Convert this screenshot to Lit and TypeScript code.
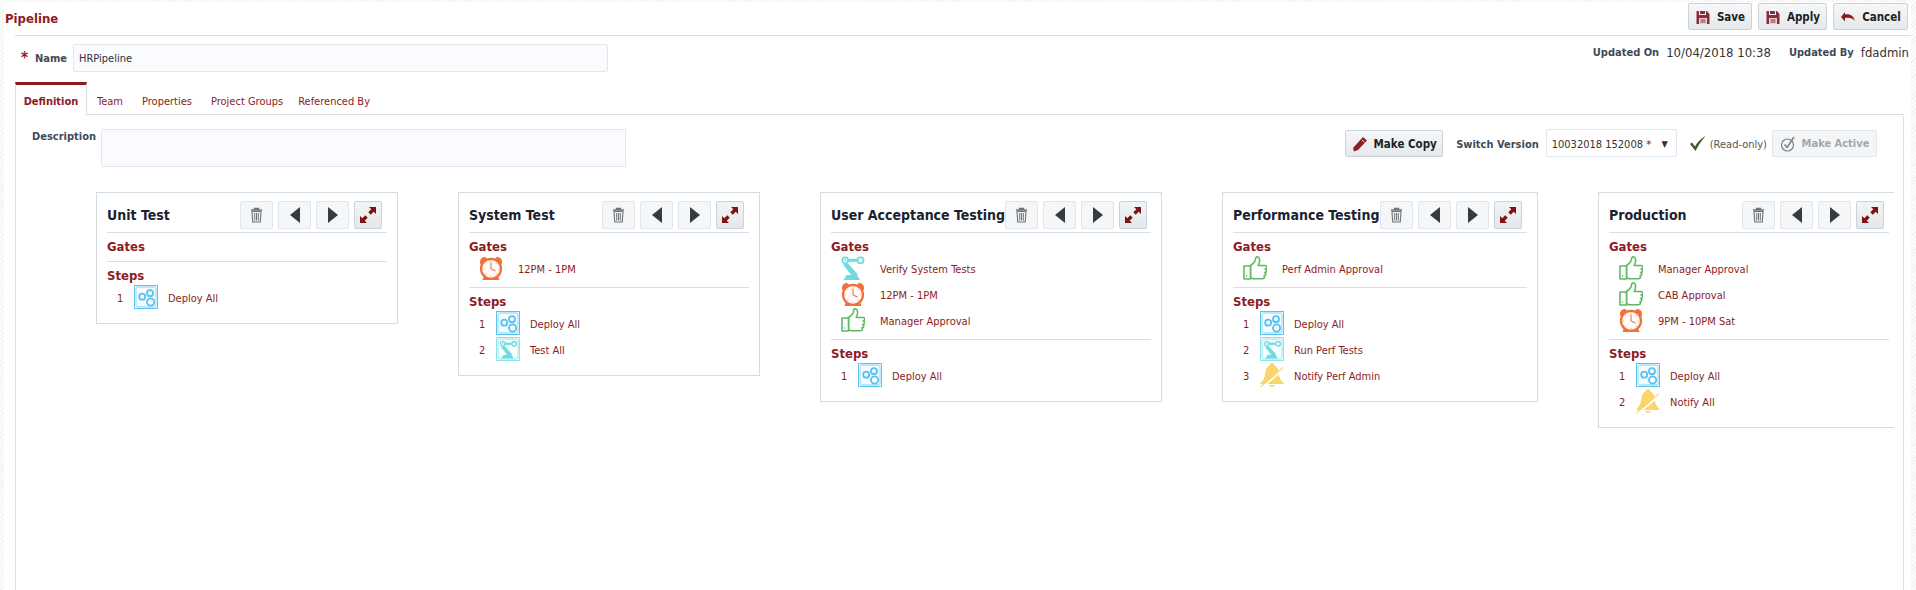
import { LitElement, html, css, svg } from "lit";
import { customElement } from "lit/decorators.js";

const gears = svg`<rect x=".5" y=".5" width="23" height="23" fill="#fff" stroke="#5cc3f1"/><rect x="2" y="2" width="20" height="20" rx="2" fill="#f4fbff" stroke="#a8e1f8" stroke-width="1.3"/><g fill="none" stroke="#58c1f0" stroke-width="1.800"><circle cx="8.2" cy="11.7" r="3"/><circle cx="16" cy="8.2" r="3"/><circle cx="16.6" cy="17" r="3.6"/></g>`;
const arm = svg`<g fill="none" stroke="#6fdbe0"><circle cx="4.200" cy="4.300" r="3" stroke-width="1.700"/><path d="M7.500 4.300h8.500" stroke-width="3"/><circle cx="19.500" cy="4.300" r="3" stroke-width="1.800"/></g><circle cx="4.200" cy="4.300" r="1" fill="#6fdbe0"/><path d="M2 8.500l5-1 10 11-6 1.500z" fill="#6fdbe0"/><path d="M5.500 19h10.500l3 5H2.500z" fill="#6fdbe0"/>`;
const armBox = svg`<rect x=".5" y=".5" width="23" height="23" fill="#fff" stroke="#8fe3ea"/><rect x="2" y="2" width="20" height="20" rx="2" fill="#f6feff" stroke="#b5eef1" stroke-width="1.400"/><g transform="translate(3.500 3.500) scale(.75)">${arm}</g>`;
const clock = svg`<path d="M1.500 8.500C0 5 1.500 1.500 6 .8L8.500 3.500zM22.500 8.500c1.500-3.500 0-7-4.500-7.700L15.500 3.500z" fill="#f0713c"/><path d="M5 20l-1.500 4h17L19 20z" fill="#f0713c"/><circle cx="12" cy="12.800" r="10" fill="#fffaf7" stroke="#f0713c" stroke-width="2.200"/><path d="M12 13V6.500M12 13l4.500 2" stroke="#d97d5a" stroke-width="1.100" fill="none"/><g fill="#f4b9a0"><circle cx="12" cy="5" r=".8"/><circle cx="12" cy="20.500" r=".8"/><circle cx="4.300" cy="13" r=".8"/><circle cx="19.700" cy="13" r=".8"/><circle cx="6.700" cy="7.500" r=".7"/><circle cx="17.300" cy="7.500" r=".7"/><circle cx="6.700" cy="18.300" r=".7"/><circle cx="17.300" cy="18.300" r=".7"/></g>`;
const thumb = svg`<g fill="#fff" stroke="#5fb865" stroke-width="1.600" stroke-linejoin="round"><path d="M7.500 9.500C10.500 7.500 12.500 6 12.500 3c0-2.300 2.500-3 3.500-1 1.200 2 .5 5-.8 7.500H22c2.300 0 2.300 3.500 0 3.500 2 0 2 3.500-.5 3.500 1.800 0 1.800 3.300-.7 3.300 1.200 0 1 3-1.300 3H11c-1.500 0-2.500-.8-3.500-.8z"/><path d="M1 10h6.500v13H1z"/></g><circle cx="3.500" cy="20" r=".8" fill="#5fb865"/>`;
const bell = svg`<path d="M12 0c1.500 0 2.500 1 2.500 2.500 3 1.500 4 4 4.300 8 .3 4 1.700 7 4.700 9.500V21H.5v-1c3-2.500 4.400-5.500 4.700-9.500.3-4 1.300-6.500 4.300-8C9.500 1 10.500 0 12 0zM9 22h6c-.5 1.300-1.500 2-3 2s-2.500-.7-3-2z" fill="#fbd56b"/><path d="M1.500 25L24 6" stroke="#fff" stroke-width="1.800"/><path d="M.5 24L23 4.500" stroke="#fbd56b" stroke-width="1.100"/>`;
const icons: Record<string, unknown> = { gears, arm, armBox, clock, thumb, bell };

const floppy = html`<svg class="bi" viewBox="0 0 16 16"><path d="M2 2h2v4h7V2h1l2.500 3v10H1.500V2z" fill="#8f2a38"/><path d="M5 2h5v3H5z" fill="#8f2a38"/><path d="M4 9h8v6H4z" fill="#e6cfd2"/><path d="M5.500 11h5M5.500 13h5" stroke="#8f2a38"/></svg>`;
const undo = html`<svg class="bi" viewBox="0 0 16 16"><path d="M1 8l4-5v2.500c5-1 8.500 1 10 6.500-2.500-3-5.500-3.800-10-3v3.500z" fill="#8a1a1e"/></svg>`;
const pencil = html`<svg class="bi" viewBox="0 0 16 16"><path d="M11 1l4 3.500L6 14l-4 1.500L1 12z" fill="#8f1f28"/><path d="M10 4l2.500 2.200" stroke="#f3e6e6" stroke-width=".9"/></svg>`;
const tick = html`<svg class="tick" viewBox="0 0 17 17"><path d="M1 9l2-1.500 3 4C8.500 7 12 3.500 16.500 1 12.500 5.500 9.500 10 6.500 16z" fill="#3c5a34"/></svg>`;
const circled = html`<svg class="bi" viewBox="0 0 16 16"><circle cx="7.500" cy="9" r="6" fill="none" stroke="#7d8286" stroke-width="1.200"/><path d="M4.500 8.500l2.500 3L14 1" fill="none" stroke="#7d8286" stroke-width="1.500"/></svg>`;
const trash = html`<svg class="trash" viewBox="0 0 13 16"><path d="M1 3h11M4.500 3V1.500h4V3" fill="none" stroke="#6e7478" stroke-width="1.300"/><path d="M2 4.500h9l-.7 10.500H2.700z" fill="#eef0f1" stroke="#6e7478" stroke-width="1.100"/><path d="M4.700 6v7.500M6.500 6v7.500M8.300 6v7.500" stroke="#6e7478" stroke-width="1"/></svg>`;
const left = html`<svg class="tri" viewBox="0 0 10 16"><path d="M10 0v16L0 8z" fill="#363c3e"/></svg>`;
const right = html`<svg class="tri" viewBox="0 0 10 16"><path d="M0 0v16l10-8z" fill="#363c3e"/></svg>`;
const expand = html`<svg class="exp" viewBox="0 0 16 16"><path d="M16 0v7l-2.300-2.300-3 3-2.400-2.400 3-3L9 0zM0 16V9l2.300 2.300 3-3 2.400 2.400-3 3L7 16z" fill="#7c1315"/></svg>`;

type Row = [string, string];
interface Stage { title: string; width: number; gates: Row[]; steps: Row[]; }
const stages: Stage[] = [
  { title: "Unit Test", width: 302, gates: [], steps: [["gears", "Deploy All"]] },
  { title: "System Test", width: 302, gates: [["clock", "12PM - 1PM"]], steps: [["gears", "Deploy All"], ["armBox", "Test All"]] },
  { title: "User Acceptance Testing", width: 342, gates: [["arm", "Verify System Tests"], ["clock", "12PM - 1PM"], ["thumb", "Manager Approval"]], steps: [["gears", "Deploy All"]] },
  { title: "Performance Testing", width: 316, gates: [["thumb", "Perf Admin Approval"]], steps: [["gears", "Deploy All"], ["armBox", "Run Perf Tests"], ["bell", "Notify Perf Admin"]] },
  { title: "Production", width: 302, gates: [["thumb", "Manager Approval"], ["thumb", "CAB Approval"], ["clock", "9PM - 10PM Sat"]], steps: [["gears", "Deploy All"], ["bell", "Notify All"]] },
];

const ic = (n: string) => html`<svg class="ic" viewBox="0 0 24 24">${icons[n]}</svg>`;

@customElement("app-root")
export class AppRoot extends LitElement {
  static styles = css`
    :host { display: block; width: 1916px; height: 590px; overflow: hidden; box-sizing: border-box; padding: 2px 5px 0 4px;
      background: repeating-linear-gradient(135deg, #f1f1f1 0 1px, #fcfcfc 1px 3px);
      font-family: "DejaVu Sans Condensed", "DejaVu Sans", sans-serif; font-stretch: condensed; font-size: 11px; color: #333; }
    .page { background: #fff; height: 588px; display: flex; flex-direction: column; overflow: hidden; }
    .top { height: 33px; display: flex; align-items: center; justify-content: space-between; padding: 0 3px 0 1px; }
    .top h1 { margin: 0; font-size: 13px; font-weight: bold; color: #8c1c22; }
    .btns { display: flex; gap: 6px; align-self: flex-start; margin-top: 1px; }
    .btn { height: 27px; box-sizing: border-box; display: flex; align-items: center; gap: 6px; justify-content: center; border: 1px solid #c9d3dc; border-radius: 2px; background: linear-gradient(#f5f7f8, #e6e9eb); font-weight: bold; color: #1c1f24; font-size: 11.500px; }
    .save { width: 64px; } .apply { width: 69px; } .cancel { width: 75px; }
    .bi { width: 16px; height: 16px; flex: none; }
    .body { margin-left: 11px; border-top: 1px solid #d8dfe6; flex: 1; display: flex; flex-direction: column; }
    .name { height: 46px; display: flex; align-items: flex-start; padding-top: 8px; box-sizing: border-box; justify-content: space-between; }
    .nl { display: flex; align-items: center; height: 28px; }
    .star { color: #8c1c22; font-weight: bold; font-size: 15px; width: 14px; margin-left: 6px; }
    .lab { font-weight: bold; color: #3f4a58; }
    .inp { background: #fafbfe; border: 1px solid #e1e7ed; border-radius: 2px; box-sizing: border-box; }
    .ni { width: 535px; height: 28px; margin-left: 6px; display: flex; align-items: center; padding-left: 5px; color: #2f2f38; font-size: 11px; }
    .upd { display: flex; align-items: center; height: 20px; margin-top: -2px; padding-right: 2px; font-size: 13px; color: #333; }
    .upd .lab { font-size: 11px; margin-right: 7px; }
    .upd .v { margin-right: 18px; } .upd .v:last-child { margin-right: 0; }
    .tabs { display: flex; height: 33px; box-sizing: border-box; border-bottom: 1px solid #d8dfe6; margin-right: 7px; }
    .tab { padding: 6px 0 0; color: #8c1c22; display: flex; align-items: center; }
    .tab.a { width: 72px; box-sizing: border-box; justify-content: center; font-weight: bold; border-top: 3px solid #8c1c22; border-left: 1px solid #d8dfe6; border-right: 1px solid #d8dfe6; background: #fff; height: 33px; padding: 2px 0 0; margin-right: 10px; }
    .tab.t { margin-right: 19px; }
    .tab.t.pg { margin-right: 15px; }
    .panel { flex: 1; margin-right: 7px; border-left: 1px solid #d8dfe6; border-right: 1px solid #d8dfe6; border-top-right-radius: 3px; padding-top: 14px; display: flex; flex-direction: column; min-height: 0; }
    .desc { display: flex; justify-content: space-between; align-items: flex-start; padding: 0 26px 0 16px; height: 63px; flex: none; }
    .dl { display: flex; }
    .dl .lab { margin: 1px 6px 0 0; width: 63px; line-height: 14px; }
    .dt { width: 525px; height: 38px; }
    .ctl { display: flex; align-items: center; height: 28px; color: #333; }
    .mc { width: 98px; padding-top: 1px; }
    .sv { margin: 2px 7px 0 13px; }
    .sel { width: 131px; height: 28px; display: flex; align-items: center; justify-content: space-between; padding: 2px 8px 0 5px; background: #fff; border-radius: 2px; color: #333; }
    .sel span:last-child { font-size: 9px; }
    .tick { width: 17px; height: 17px; margin: 0 4px 0 12px; }
    .ro { margin: 2px 5px 0 0; color: #555; }
    .ma { width: 105px; background: #f3f5f7; border-color: #e1e6ea; color: #a3a7ab; font-size: 11px; padding-top: 1px; }
    .cards { display: flex; align-items: flex-start; gap: 60px; padding-left: 80px; margin-right: 9px; overflow: hidden; }
    .card { flex: none; box-sizing: border-box; border: 1px solid #d3dbe3; padding: 8px 10px 7px; }
    .hd { display: flex; align-items: center; border-bottom: 1px solid #d8dfe6; padding: 0 5px 3px 0; }
    .hd h2 { flex: 1; margin: 0; font-size: 14px; font-weight: bold; color: #1a2230; white-space: nowrap; }
    .ib { display: flex; gap: 5px; flex: none; }
    .b { width: 33px; height: 28px; box-sizing: border-box; display: flex; align-items: center; justify-content: center; border: 1px solid #e1e6ea; border-radius: 2px; background: #f4f6f7; }
    .b.x { width: 28px; background: linear-gradient(#f2f4f5, #e5e8ea); border-color: #c9d3dc; }
    .trash { width: 13px; height: 16px; } .tri { width: 10px; height: 16px; } .exp { width: 16px; height: 16px; }
    .sec { padding: 6px 0 5px; border-bottom: 1px solid #d8dfe6; }
    .sec.s { border-bottom: 0; }
    .sec h3 { margin: 0 0 1px; height: 16px; line-height: 16px; font-size: 13px; font-weight: bold; color: #8c1c22; }
    .row { display: flex; align-items: center; height: 26px; padding-bottom: 2px; box-sizing: border-box; color: #8c1c22; white-space: nowrap; }
    .row > span { padding-top: 3px; }
    .ic { width: 24px; height: 24px; flex: none; }
    .g .ic { margin: 0 15px 0 10px; }
    .n { width: 17px; padding-left: 10px; flex: none; }
    .r .ic { margin-right: 10px; }
  `;

  render() {
    return html`<div class="page">
      <div class="top"><h1>Pipeline</h1>
        <div class="btns">
          <div class="btn save">${floppy}Save</div>
          <div class="btn apply">${floppy}Apply</div>
          <div class="btn cancel">${undo}Cancel</div>
        </div>
      </div>
      <div class="body">
        <div class="name">
          <div class="nl"><span class="star">*</span><span class="lab">Name</span><div class="inp ni">HRPipeline</div></div>
          <div class="upd"><span class="lab">Updated On</span><span class="v">10/04/2018 10:38</span><span class="lab">Updated By</span><span class="v">fdadmin</span></div>
        </div>
        <div class="tabs">
          <div class="tab a">Definition</div><div class="tab t">Team</div><div class="tab t">Properties</div><div class="tab t pg">Project Groups</div><div class="tab t">Referenced By</div>
        </div>
        <div class="panel">
          <div class="desc">
            <div class="dl"><span class="lab">Description</span><div class="inp dt"></div></div>
            <div class="ctl">
              <div class="btn mc">${pencil}Make Copy</div>
              <span class="lab sv">Switch Version</span>
              <div class="inp sel"><span>10032018 152008 *</span><span>▼</span></div>
              ${tick}<span class="ro">(Read-only)</span>
              <div class="btn ma">${circled}Make Active</div>
            </div>
          </div>
          <div class="cards">
            ${stages.map((s) => html`<div class="card" style="width:${s.width}px">
              <div class="hd"><h2>${s.title}</h2><div class="ib"><div class="b">${trash}</div><div class="b">${left}</div><div class="b">${right}</div><div class="b x">${expand}</div></div></div>
              <div class="sec"><h3>Gates</h3>${s.gates.map((g) => html`<div class="row g">${ic(g[0])}<span>${g[1]}</span></div>`)}</div>
              <div class="sec s"><h3>Steps</h3>${s.steps.map((g, i) => html`<div class="row r"><span class="n">${i + 1}</span>${ic(g[0])}<span>${g[1]}</span></div>`)}</div>
            </div>`)}
          </div>
        </div>
      </div>
    </div>`;
  }
}
